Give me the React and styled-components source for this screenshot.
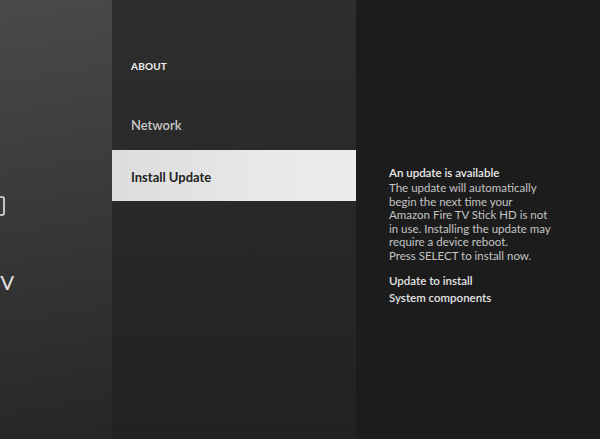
import React from "react";
import styled, { createGlobalStyle } from "styled-components";

const Global = createGlobalStyle`
  html, body { margin: 0; padding: 0; background: #1c1c1c; }
  body { font-family: Lato, "Open Sans", sans-serif; }
`;

const Screen = styled.div`
  width: 600px;
  height: 439px;
  display: grid;
  grid-template-columns: 112px 244px 1fr;
  overflow: hidden;
`;

const Rail = styled.div`
  background: linear-gradient(170deg, #4a4a4a 0%, #3a3a3a 45%, #262626 100%);
  overflow: hidden;
  display: flex;
  flex-direction: column;
  align-items: flex-end;
  padding-top: 196px;
  padding-right: 98px;
  gap: 56px;
  color: #e6e6e6;
`;

const RailIcon = styled.svg`
  width: 14px;
  height: 20px;
  display: block;
  margin-right: 9px;
`;

const RailLabel = styled.div`
  font-size: 20px;
  white-space: nowrap;
  line-height: 1;
`;

const Menu = styled.div`
  background: linear-gradient(180deg, #2e2e2e 0%, #282828 50%, #222 100%);
  display: flex;
  flex-direction: column;
  padding-top: 60px;
`;

const Heading = styled.div`
  padding-left: 19px;
  font-size: 10px;
  font-weight: 700;
  letter-spacing: 0.2px;
  color: #f0f0f0;
  height: 40px;
`;

const Item = styled.div`
  height: ${(p) => (p.$active ? "51px" : "50px")};
  box-sizing: border-box;
  padding-top: ${(p) => (p.$active ? "3px" : "0")};
  display: flex;
  align-items: center;
  padding-left: 19px;
  font-size: 13px;
  font-weight: ${(p) => (p.$active ? 700 : 600)};
  color: ${(p) => (p.$active ? "#222" : "#c8c8c8")};
  background: ${(p) =>
    p.$active ? "linear-gradient(90deg, #dcdcdc 0%, #e8e8e8 60%, #ececec 100%)" : "transparent"};
`;

const Detail = styled.div`
  background: #1c1c1c;
  padding: 165px 0 0 33px;
  display: flex;
  flex-direction: column;
`;

const Title = styled.div`
  font-size: 11.5px;
  font-weight: 600;
  color: #ececec;
  line-height: 16px;
`;

const Body = styled.div`
  font-size: 11.5px;
  color: #c4c4c4;
  line-height: 13.5px;
  width: 166px;
  margin-bottom: 10px;
`;

const Meta = styled.div`
  font-size: 11.5px;
  font-weight: 600;
  color: #e4e4e4;
  line-height: 17px;
`;

export default function App() {
  return (
    <>
      <Global />
      <Screen>
        <Rail>
          <RailIcon viewBox="0 0 14 20">
            <rect x="1" y="1" width="12" height="18" rx="1.5" fill="none" stroke="#e6e6e6" strokeWidth="1.6" />
          </RailIcon>
          <RailLabel>My Fire TV</RailLabel>
        </Rail>
        <Menu>
          <Heading>ABOUT</Heading>
          <Item>Network</Item>
          <Item $active>Install Update</Item>
        </Menu>
        <Detail>
          <Title>An update is available</Title>
          <Body>
            The update will automatically begin the next time your Amazon Fire TV Stick HD is not
            in use. Installing the update may require a device reboot.
            <br />
            Press SELECT to install now.
          </Body>
          <Meta>Update to install</Meta>
          <Meta>System components</Meta>
        </Detail>
      </Screen>
    </>
  );
}
